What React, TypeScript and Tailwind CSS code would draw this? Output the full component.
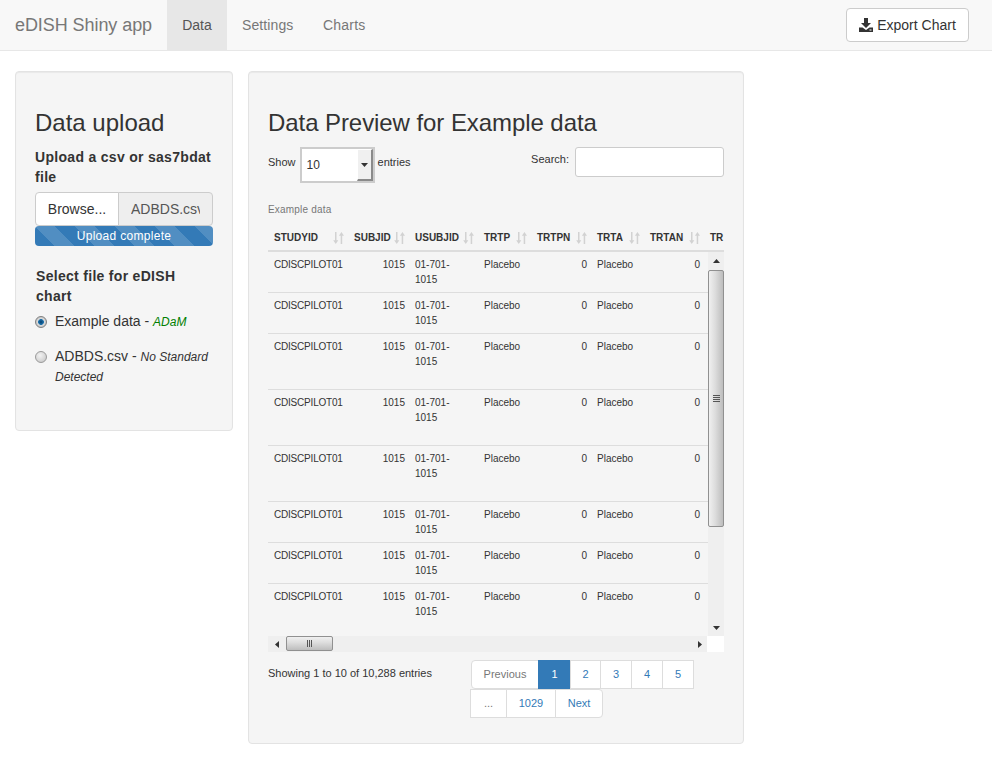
import React from "react";

const colW = ["w-[80px]", "w-[61px]", "w-[69px]", "w-[53px]", "w-[60px]", "w-[53px]", "w-[60px]", "w-[60px]"];
const heads = ["STUDYID", "SUBJID", "USUBJID", "TRTP", "TRTPN", "TRTA", "TRTAN", "TR"];
const rowH = ["h-[41px]", "h-[41px]", "h-[56px]", "h-[56px]", "h-[56px]", "h-[41px]", "h-[41px]", "h-[56px]"];

function Cols() {
  return (
    <colgroup>
      {colW.map((c, i) => (
        <col key={i} className={c} />
      ))}
    </colgroup>
  );
}

function SortIcon() {
  return (
    <svg width="11" height="12" viewBox="0 0 11 12" className="shrink-0 mt-[1px]" fill="#d2d2d2">
      <path d="M2 0h1.5v8.2h1.8L2.75 12 .2 8.2H2z" />
      <path d="M7.7 12h1.5V3.8H11L8.45 0 5.9 3.8h1.8z" />
    </svg>
  );
}

function Arrow({ dir }: { dir: "up" | "down" | "left" | "right" }) {
  const d = {
    up: "M0 4L3.5 0L7 4z",
    down: "M0 0L7 0L3.5 4z",
    left: "M4 0L4 7L0 3.5z",
    right: "M0 0L4 3.5L0 7z",
  }[dir];
  const vertical = dir === "up" || dir === "down";
  return (
    <svg width={vertical ? 7 : 4} height={vertical ? 4 : 7} viewBox={vertical ? "0 0 7 4" : "0 0 4 7"} fill="#333">
      <path d={d} />
    </svg>
  );
}

function Radio({ checked }: { checked?: boolean }) {
  return (
    <span
      className={
        checked
          ? "mt-[5px] block w-[12px] h-[12px] shrink-0 rounded-full border border-[#808080] bg-[radial-gradient(circle_closest-side,#063f6e_0%,#1f73ad_52%,#dedede_64%,#c4c4c4_100%)]"
          : "mt-[5px] block w-[12px] h-[12px] shrink-0 rounded-full border border-[#9a9a9a] bg-[radial-gradient(circle_at_40%_35%,#f2f2f2_0%,#d6d6d6_60%,#bdbdbd_100%)]"
      }
    />
  );
}

function PageLink({ className, children }: { className: string; children: React.ReactNode }) {
  return (
    <span className={"flex items-center justify-center h-[29px] border border-[#ddd] -ml-px first:ml-0 bg-white " + className}>
      {children}
    </span>
  );
}

export default function App() {
  return (
    <div className="min-h-[784px] bg-white text-[#333] text-[14px] leading-[20px] font-['Liberation_Sans',Arial,sans-serif]">
      <nav className="h-[51px] flex bg-[#f8f8f8] border-b border-[#e7e7e7] pl-[15px] pr-[23px]">
        <span className="w-[152px] text-[18px] leading-[50px] text-[#777] tracking-[-0.07px]">eDISH Shiny app</span>
        <span className="w-[60px] text-center leading-[50px] text-[#555] bg-[#e7e7e7]">Data</span>
        <span className="w-[81px] pl-[15px] leading-[50px] text-[#777] tracking-[0.1px]">Settings</span>
        <span className="pl-[15px] leading-[50px] text-[#777] tracking-[0.2px]">Charts</span>
        <button className="ml-auto mt-[8px] h-[34px] w-[123px] flex items-center justify-center gap-[4px] bg-white border border-[#ccc] rounded-[4px] text-[#333]">
          <svg width="14" height="14" viewBox="0 0 14 14" fill="#333">
            <path d="M5 0h4v5h3L7 10 2 5h3z" />
            <path d="M0 9.5h3.5L7 12l3.5-2.5H14V14H0z" />
            <rect x="10.5" y="11.5" width="2" height="1" fill="#fff" />
          </svg>
          Export Chart
        </button>
      </nav>

      <main className="flex items-start gap-[15px] pl-[15px] pt-[20px]">
        <section className="w-[218px] h-[360px] p-[19px] bg-[#f5f5f5] border border-[#e3e3e3] rounded-[4px] shadow-[inset_0_1px_1px_rgba(0,0,0,0.05)]">
          <h3 className="mt-[19px] mb-[11px] text-[24px] leading-[26.4px] font-normal">Data upload</h3>
          <div className="font-bold tracking-[0.3px]">Upload a csv or sas7bdat file</div>
          <div className="mt-[5px] flex h-[34px]">
            <span className="w-[84px] flex items-center justify-center bg-white border border-[#ccc] rounded-l-[4px]">
              Browse...
            </span>
            <span className="flex-1 -ml-px pl-[12px] pr-[12px] bg-[#eee] border border-[#ccc] rounded-r-[4px] leading-[32px] text-[#555] min-w-0">
              <span className="block overflow-hidden whitespace-nowrap">ADBDS.csv</span>
            </span>
          </div>
          <div className="h-[20px] rounded-[4px] bg-[#337ab7] text-white text-[12px] leading-[20px] text-center tracking-[0.3px] bg-[linear-gradient(45deg,rgba(255,255,255,0.15)_25%,transparent_25%,transparent_50%,rgba(255,255,255,0.15)_50%,rgba(255,255,255,0.15)_75%,transparent_75%,transparent)] bg-[length:40px_40px]">
            Upload complete
          </div>
          <div className="mt-[20px] font-bold tracking-[0.3px] pl-px">
            Select file for eDISH
            <br />
            chart
          </div>
          <div className="mt-[5px] flex gap-[8px]">
            <Radio checked />
            <div>
              Example data - <i className="text-[12px] leading-[14px] text-[#008000]">ADaM</i>
            </div>
          </div>
          <div className="mt-[15px] flex gap-[8px]">
            <Radio />
            <div>
              ADBDS.csv - <i className="text-[12px] leading-[14px]">No Standard Detected</i>
            </div>
          </div>
        </section>

        <section className="w-[496px] h-[673px] p-[19px] bg-[#f5f5f5] border border-[#e3e3e3] rounded-[4px] shadow-[inset_0_1px_1px_rgba(0,0,0,0.05)] text-[10px] leading-[15px]">
          <h3 className="mt-[19px] mb-[11px] text-[24px] leading-[26.4px] font-normal tracking-[-0.07px]">
            Data Preview for Example data
          </h3>

          <div className="flex items-start justify-between h-[47px]">
            <div className="flex items-center">
              <span className="text-[11px] mt-[-5px]">Show</span>
              <div className="ml-[4px] w-[75px] h-[36px] flex bg-white border-2 border-[#ccc] items-center justify-between pl-[5px] text-[12px]">
                <span className="mt-[1px]">10</span>
                <span className="h-[32px] w-[16px] flex items-center justify-center bg-[#f0f0f0] border-l border-t border-white border-r-2 border-b-2 border-r-[#8a8a8a] border-b-[#8a8a8a]">
                  <Arrow dir="down" />
                </span>
              </div>
              <span className="ml-[3px] text-[11px] mt-[-5px]">entries</span>
            </div>
            <div className="flex items-start">
              <span className="text-[11px] mr-[6px] mt-[5px]">Search:</span>
              <span className="block w-[149px] h-[30px] bg-white border border-[#ccc] rounded-[3px]" />
            </div>
          </div>

          <div className="text-[#777] h-[32px] pt-[8px] tracking-[0.2px]">Example data</div>

          <div className="overflow-hidden border-b-2 border-[#ddd] h-[26px]">
            <table className="table-fixed w-[496px] border-separate border-spacing-0">
              <Cols />
              <thead>
                <tr>
                  {heads.map((h, i) => (
                    <th key={i} className="pl-[6px] pr-[4px] h-[22px] text-left font-bold align-middle">
                      <div className="flex items-center justify-between whitespace-nowrap">
                        <span>{h}</span>
                        {h !== "TR" && <SortIcon />}
                      </div>
                    </th>
                  ))}
                </tr>
              </thead>
            </table>
          </div>

          <div className="flex h-[384px]">
            <div className="flex-1 overflow-hidden">
              <table className="table-fixed w-[496px] border-separate border-spacing-0">
                <Cols />
                <tbody>
                  {rowH.map((h, r) => (
                    <tr key={r} className={h}>
                      <td className="pl-[6px] pr-[4px] pt-[5px] align-top border-b border-[#ddd] tracking-[-0.2px]">CDISCPILOT01</td>
                      <td className="pl-[6px] pr-[4px] pt-[5px] align-top border-b border-[#ddd] text-right">1015</td>
                      <td className="pl-[6px] pr-[4px] pt-[5px] align-top border-b border-[#ddd]">
                        01-701-
                        <br />
                        1015
                      </td>
                      <td className="pl-[6px] pr-[4px] pt-[5px] align-top border-b border-[#ddd]">Placebo</td>
                      <td className="pl-[6px] pr-[4px] pt-[5px] align-top border-b border-[#ddd] text-right">0</td>
                      <td className="pl-[6px] pr-[4px] pt-[5px] align-top border-b border-[#ddd]">Placebo</td>
                      <td className="pl-[6px] pr-[4px] pt-[5px] align-top border-b border-[#ddd] text-right">0</td>
                      <td className="border-b border-[#ddd]" />
                    </tr>
                  ))}
                </tbody>
              </table>
            </div>
            <div className="w-[16px] shrink-0 flex flex-col bg-[#efefef]">
              <div className="h-[18px] flex items-center justify-center">
                <Arrow dir="up" />
              </div>
              <div className="h-[257px] flex flex-col items-center justify-center gap-px border border-[#909090] rounded-[2px] bg-[linear-gradient(90deg,#f0f0f0,#dcdcdc_45%,#bdbdbd)]">
                <span className="block w-[7px] h-px bg-[#555]" />
                <span className="block w-[7px] h-px bg-[#555]" />
                <span className="block w-[7px] h-px bg-[#555]" />
                <span className="block w-[7px] h-px bg-[#555]" />
              </div>
              <div className="mt-auto h-[16px] flex items-center justify-center">
                <Arrow dir="down" />
              </div>
            </div>
          </div>

          <div className="flex h-[16px]">
            <div className="flex-1 flex items-center bg-[#efefef]">
              <span className="w-[18px] flex items-center justify-center">
                <Arrow dir="left" />
              </span>
              <div className="w-[47px] h-[15px] self-start flex items-center justify-center gap-px border border-[#909090] rounded-[2px] bg-[linear-gradient(180deg,#f0f0f0,#dcdcdc_45%,#bdbdbd)]">
                <span className="block w-px h-[7px] bg-[#555]" />
                <span className="block w-px h-[7px] bg-[#555]" />
                <span className="block w-px h-[7px] bg-[#555]" />
              </div>
              <span className="ml-auto mr-[5px] flex">
                <Arrow dir="right" />
              </span>
            </div>
            <div className="w-[17px] bg-white" />
          </div>

          <div className="flex mt-[8px]">
            <div className="w-[202px] text-[11px] pt-[6px]">Showing 1 to 10 of 10,288 entries</div>
            <div className="flex flex-col text-[11px]">
              <div className="flex ml-px">
                <PageLink className="w-[68px] rounded-l-[4px] text-[#777]">Previous</PageLink>
                <PageLink className="w-[33px] !bg-[#337ab7] !border-[#337ab7] text-white">1</PageLink>
                <PageLink className="w-[31px] text-[#337ab7]">2</PageLink>
                <PageLink className="w-[32px] text-[#337ab7]">3</PageLink>
                <PageLink className="w-[32px] text-[#337ab7]">4</PageLink>
                <PageLink className="w-[32px] text-[#337ab7]">5</PageLink>
              </div>
              <div className="flex">
                <PageLink className="w-[37px] text-[#777]">...</PageLink>
                <PageLink className="w-[50px] text-[#337ab7]">1029</PageLink>
                <PageLink className="w-[48px] rounded-r-[4px] text-[#337ab7]">Next</PageLink>
              </div>
            </div>
          </div>
        </section>
      </main>
    </div>
  );
}
